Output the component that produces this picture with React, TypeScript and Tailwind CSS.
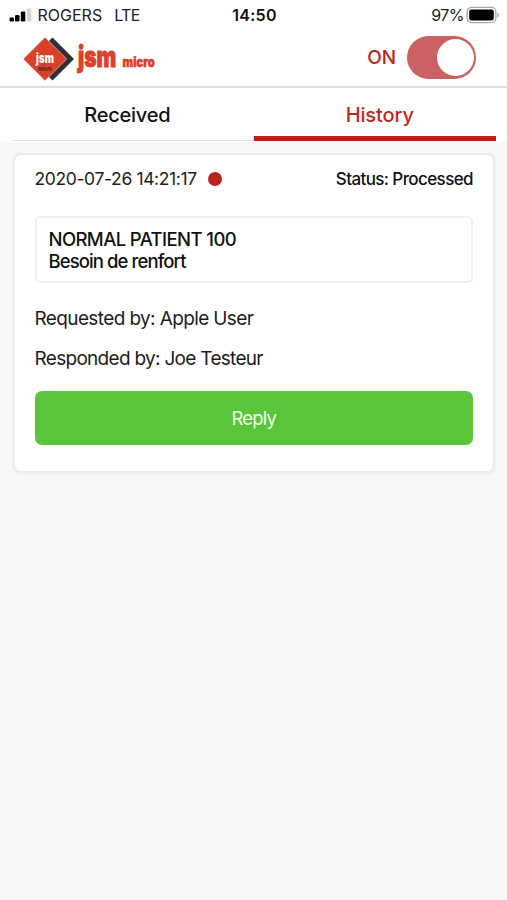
import React from "react";

function StatusBar() {
  return (
    <div className="flex h-[30px] items-center text-[16px] leading-[30px] text-[#222]">
      <div className="flex flex-1 items-center pl-[9px]">
        <svg width="23" height="14" viewBox="0 0 23 14" className="mr-[5.500px] shrink-0">
          <rect x="0.5" y="9.5" width="4.500" height="4" rx="1.2" fill="#000" />
          <rect x="6" y="7" width="4.500" height="6.5" rx="1.2" fill="#000" />
          <rect x="11.8" y="3.500" width="4.500" height="10" rx="1.2" fill="#000" />
          <rect x="18" y="0.5" width="4.300" height="13" rx="1.2" fill="#d4d4d4" />
        </svg>
        <span className="tracking-[0px]">ROGERS</span>
        <span className="ml-[12px] tracking-[-0.6px]">LTE</span>
      </div>
      <span className="font-semibold tracking-[0.3px] text-[#111]">14:50</span>
      <div className="flex flex-1 items-center justify-end pr-[7px]">
        <span className="mr-[2px] tracking-[-0.5px]">97%</span>
        <svg width="34" height="18" viewBox="0 0 34 18" className="shrink-0">
          <rect x="1.2" y="1.4" width="28.6" height="15.2" rx="4.2" fill="#fff" stroke="#aaa" strokeWidth="1.4" />
          <rect x="3.2" y="3.5" width="24.6" height="11" rx="2.2" fill="#000" />
          <path d="M31.3 6.5q1.8 .6 1.8 2.5t-1.8 2.5z" fill="#aaa" />
        </svg>
      </div>
    </div>
  );
}

function Logo() {
  return (
    <svg width="140" height="46" viewBox="0 0 140 46" className="block">
      <path d="M31.500 2.500 52 23 31.500 43.500 11 23z" fill="#303133" strokeLinejoin="round" stroke="#303133" strokeWidth="1.500" />
      <path d="M24 2.500 44.500 23 24 43.500 3.500 23z" fill="#dc402b" stroke="#e9cdc8" strokeWidth="2.200" strokeLinejoin="round" />
      <path d="M24 2.500 44.500 23 24 43.500 3.500 23z" fill="#dc402b" stroke="#dc402b" strokeWidth="1.200" strokeLinejoin="round" />
      <g fontFamily="Inter, sans-serif" fontWeight="900">
        <g transform="translate(15 27) scale(.7 1)">
          <text fontSize="13.500" fill="#fff" textLength="25.500" lengthAdjust="spacingAndGlyphs">jsm</text>
        </g>
        <g transform="translate(17 34.500) scale(.75 1)">
          <text fontSize="6.500" fill="#5b2822" textLength="18.500" lengthAdjust="spacingAndGlyphs">micro</text>
        </g>
        <g transform="translate(57 31) scale(.7 1)" stroke="#dc402b" strokeWidth="1">
          <text fontSize="29" fill="#dc402b" textLength="54.500" lengthAdjust="spacingAndGlyphs">jsm</text>
        </g>
        <g transform="translate(101.500 31) scale(.84 1)" stroke="#dc402b" strokeWidth="0.500">
          <text fontSize="13" fill="#dc402b" textLength="38.500" lengthAdjust="spacingAndGlyphs">micro</text>
        </g>
      </g>
    </svg>
  );
}

export default function App() {
  return (
    <div className="min-h-[900px] w-full bg-[#f9f7f8] font-[Inter,sans-serif]">
      <div className="bg-white">
        <StatusBar />
        <header className="flex h-[58px] items-start justify-between border-b-2 border-[#e0e0e0] pl-[21px] pr-[31px]">
          <div className="pt-[6px]">
            <Logo />
          </div>
          <div className="flex items-center pt-[6px]">
            <span className="mr-[11px] pt-[2px] text-[19px] font-medium tracking-[-0.1px] text-[#c02418]">ON</span>
            <div className="flex h-[43px] w-[69px] items-center justify-end rounded-full bg-[#cb6160] pr-[2px]">
              <div className="size-[37px] rounded-full bg-white" />
            </div>
          </div>
        </header>
        <nav className="mx-[11px] grid h-[54px] grid-cols-2 pb-px text-center text-[20px] font-medium leading-[54px]">
          <div className="ml-px h-[53px] border-b border-[#e2e0e0] pr-[11px] tracking-[-0.25px] text-[#111]">Received</div>
          <div className="h-[53px] border-b-[5px] border-[#b92218] pl-[10px] tracking-[-0.1px] text-[#c0281e]">History</div>
        </nav>
      </div>
      <main className="ml-[13px] mr-[12px] mt-[11px] h-[320px] rounded-[8px] border-2 border-[#ececec] bg-white pl-[19.500px] pr-[20px] text-[#1c1c1c] shadow-[0_1px_3px_rgba(0,0,0,0.05)]">
        <div className="flex items-center justify-between pt-[12px] leading-[24px]">
          <div className="flex items-center">
            <span className="text-[17.5px] tracking-[-0.37px]">2020-07-26 14:21:17</span>
            <span className="ml-[11px] size-[14px] rounded-full bg-[#bd2419]" />
          </div>
          <span className="text-[17px] font-medium tracking-[-0.6px] text-[#111]">Status: Processed</span>
        </div>
        <div className="mt-[25px] h-[67px] rounded-[5px] border-2 border-[#f0f0f0] px-[12px] pt-[10px] text-[18.500px] font-medium leading-[23px] text-[#111]">
          <p className="tracking-[-0.6px]">NORMAL PATIENT 100</p>
          <p className="-mt-px tracking-[-0.9px]">Besoin de renfort</p>
        </div>
        <p className="mt-[24px] text-[19px] leading-[24px] tracking-[-0.62px]">Requested by: Apple User</p>
        <p className="mt-[16px] text-[19px] leading-[24px] tracking-[-0.7px]">Responded by: Joe Testeur</p>
        <button className="mt-[20px] block h-[54px] w-full rounded-[7px] bg-[#5ac43b] pt-[2px] text-[18.500px] tracking-[-0.8px] text-[#f0ffe9]">Reply</button>
      </main>
    </div>
  );
}
